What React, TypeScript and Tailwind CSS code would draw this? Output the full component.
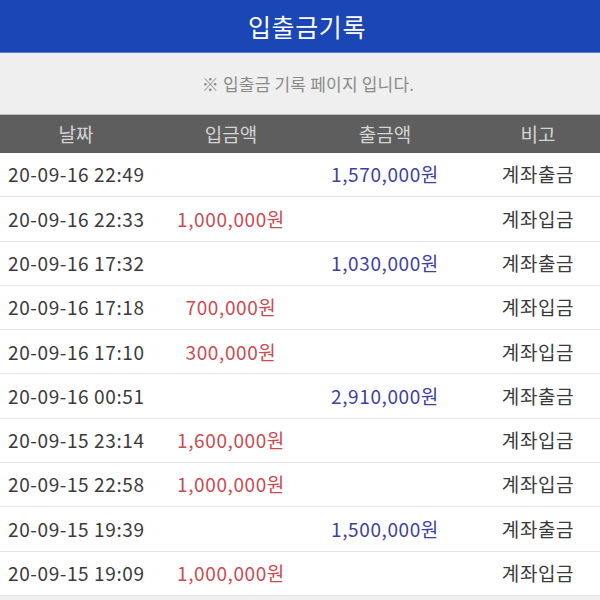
const rows = [
  { date: '20-09-16 22:49', dep: '', wd: '1,570,000원', note: '계좌출금' },
  { date: '20-09-16 22:33', dep: '1,000,000원', wd: '', note: '계좌입금' },
  { date: '20-09-16 17:32', dep: '', wd: '1,030,000원', note: '계좌출금' },
  { date: '20-09-16 17:18', dep: '700,000원', wd: '', note: '계좌입금' },
  { date: '20-09-16 17:10', dep: '300,000원', wd: '', note: '계좌입금' },
  { date: '20-09-16 00:51', dep: '', wd: '2,910,000원', note: '계좌출금' },
  { date: '20-09-15 23:14', dep: '1,600,000원', wd: '', note: '계좌입금' },
  { date: '20-09-15 22:58', dep: '1,000,000원', wd: '', note: '계좌입금' },
  { date: '20-09-15 19:39', dep: '', wd: '1,500,000원', note: '계좌출금' },
  { date: '20-09-15 19:09', dep: '1,000,000원', wd: '', note: '계좌입금' },
];

const font = { fontFamily: '"Noto Sans CJK KR", "Noto Sans", sans-serif' };

export default function App() {
  return (
    <div className="w-[600px] h-[600px] overflow-hidden bg-white" style={font}>
      <header className="h-[53px] bg-[#1a46b6] border-b border-[#5b7fd6] flex items-center justify-center pl-[14px]">
        <h1 className="text-[25px] tracking-[0.6px] text-white leading-none">입출금기록</h1>
      </header>
      <div className="h-[61px] bg-[#efefef] flex items-center justify-center pl-[16px] text-[17px] tracking-[0.2px] text-[#8a8a8a]">
        ※ 입출금 기록 페이지 입니다.
      </div>
      <div className="h-[39px] bg-[#5e5e5e] border-t border-[#bdbdbd] grid grid-cols-[150px_162px_146px_142px] items-center text-[19px] text-[#d4d4d4]">
        <div className="text-center pl-[2px]">날짜</div>
        <div className="text-center">입금액</div>
        <div className="text-center">출금액</div>
        <div className="text-center pl-[18px]">비고</div>
      </div>
      {rows.map((r) => (
        <div
          key={r.date}
          className="h-[44.3px] border-b border-[#e6e6e6] grid grid-cols-[150px_162px_146px_142px] items-center text-[19px] tracking-[0.6px]"
        >
          <div className="pl-[8px] text-[#3a3a3a] whitespace-nowrap">{r.date}</div>
          <div className="text-center text-[#cc4a52]">{r.dep}</div>
          <div className="text-center text-[#3f3f9f]">{r.wd}</div>
          <div className="text-center pl-[18px] text-[#3a3a3a]">{r.note}</div>
        </div>
      ))}
      <div className="h-[10px] bg-[#efefef]" />
    </div>
  );
}
